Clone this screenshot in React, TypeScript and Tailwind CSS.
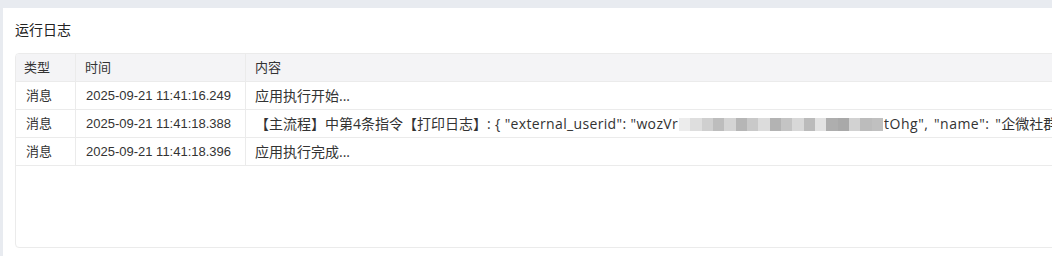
import React from "react";

const FONT = { fontFamily: '"Liberation Sans", "Noto Sans CJK SC", sans-serif' };
const CONTENT_FONT = { fontFamily: '"Open Sans", "Noto Sans CJK SC", sans-serif' };

const rows = [
  { type: "消息", time: "2025-09-21 11:41:16.249", content: "应用执行开始..." },
  { type: "消息", time: "2025-09-21 11:41:18.388", content: null },
  { type: "消息", time: "2025-09-21 11:41:18.396", content: "应用执行完成..." },
];

const blurShades = [
  "bg-[#ececec]", "bg-[#dedede]", "bg-[#cfcfcf]", "bg-[#bdbdbd]", "bg-[#d4d4d4]", "bg-[#b6b6b6]",
  "bg-[#c9c9c9]", "bg-[#dcdcdc]", "bg-[#b3b3b3]", "bg-[#c4c4c4]", "bg-[#d8d8d8]",
  "bg-[#bbbbbb]", "bg-[#e2e2e2]", "bg-[#aeaeae]", "bg-[#a9a9a9]", "bg-[#d2d2d2]",
  "bg-[#bcbcbc]", "bg-[#c0c0c0]",
];

function Masked() {
  return (
    <span className="inline-flex h-[13px] w-[204px] align-middle blur-[0.6px] -mt-[1px] mx-[1px]">
      {blurShades.map((c, i) => (
        <span key={i} className={`flex-1 h-full ${c}`} />
      ))}
    </span>
  );
}

export default function App() {
  return (
    <div className="w-[1052px] h-[256px] overflow-hidden bg-[#e8ebf0] pt-2 pl-[3px]" style={FONT}>
      <div className="h-full bg-white pl-3 pt-[14px]">
        <h2 className="text-[14px] leading-[16px] text-[#222] mb-[15px]">运行日志</h2>
        <div className="w-[1100px] h-[195px] border border-[#ebebeb] rounded-[4px] overflow-hidden text-[13px] text-[#333]">
          <div className="flex h-[28px] bg-[#f4f4f6] border-b border-[#ebebeb] items-center">
            <div className="w-[60px] shrink-0 pl-[8px] h-full flex items-center border-r border-[#ebebeb]">类型</div>
            <div className="w-[170px] shrink-0 pl-[9px] h-full flex items-center border-r border-[#ebebeb]">时间</div>
            <div className="flex-1 min-w-0 pl-[9px] h-full flex items-center">内容</div>
          </div>
          {rows.map((r, i) => (
            <div key={i} className="flex h-[28px] border-b border-[#ebebeb]">
              <div className="w-[60px] shrink-0 pl-[10px] h-full flex items-center border-r border-[#ebebeb]">{r.type}</div>
              <div className="w-[170px] shrink-0 pl-[10px] h-full flex items-center border-r border-[#ebebeb]">{r.time}</div>
              <div className="flex-1 min-w-0 overflow-hidden pl-[9px] h-full flex items-center whitespace-nowrap text-[14px]" style={CONTENT_FONT}>
                {r.content ?? (
                  <span>
                    【主流程】中第4条指令【打印日志】
                    <span className="tracking-[0.35px]">: {"{"} "external_userid": "wozVr</span>
                    <Masked />
                    <span className="tracking-[0.5px] [word-spacing:1.5px]">tOhg", "name": "</span>
                    企微社群运营助手"
                  </span>
                )}
              </div>
            </div>
          ))}
        </div>
      </div>
    </div>
  );
}
